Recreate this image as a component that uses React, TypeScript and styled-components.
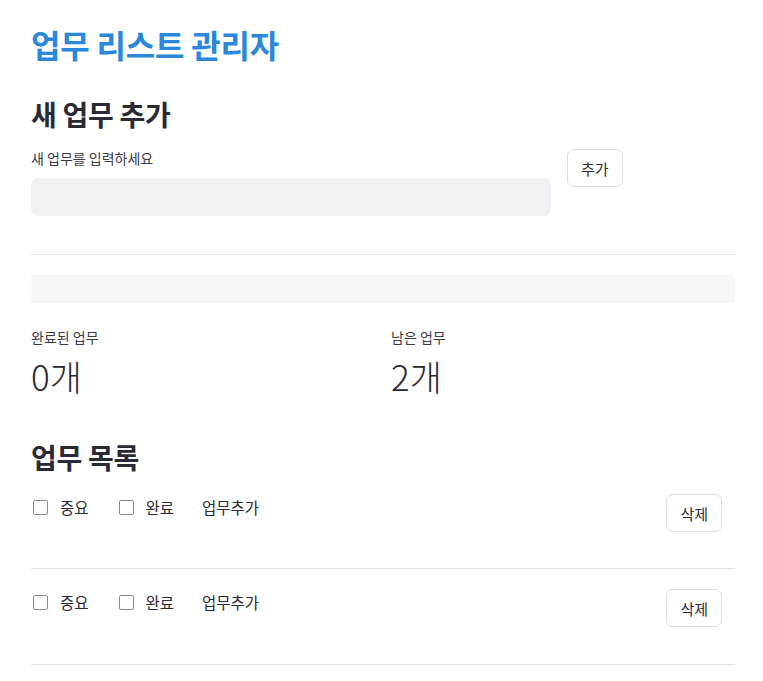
import React from "react";
import styled, { createGlobalStyle } from "styled-components";

const Global = createGlobalStyle`
  html, body { margin: 0; padding: 0; background: #ffffff; }
  body {
    font-family: "Noto Sans CJK KR", "Noto Sans", sans-serif;
    color: #2a2a35;
  }
  * { box-sizing: border-box; }
`;

const Page = styled.div`
  width: 763px;
  padding: 22px 28px 16px 31px;
  display: flex;
  flex-direction: column;
`;

const Title = styled.h1`
  margin: 0;
  font-size: 32px;
  font-weight: 700;
  line-height: 44px;
  color: #2a88dc;
  letter-spacing: -0.2px;
`;

const SectionTitle = styled.h2<{ $top: number }>`
  margin: ${(p) => p.$top}px 0 0;
  font-size: 28px;
  font-weight: 700;
  line-height: 38px;
  color: #2a2a35;
  letter-spacing: -0.3px;
`;

const FormRow = styled.div`
  display: flex;
  align-items: flex-start;
  gap: 16px;
  margin-top: 15px;
`;

const Field = styled.label`
  display: flex;
  flex-direction: column;
  gap: 10px;
  width: 520px;
`;

const FieldLabel = styled.span`
  font-size: 14px;
  line-height: 20px;
  color: #3a3a44;
`;

const TextInput = styled.input`
  height: 38px;
  border: none;
  border-radius: 8px;
  background: #eff1f5;
  padding: 0 12px;
  font-size: 15px;
  font-family: inherit;
  outline: none;
`;

const Button = styled.button<{ $offset?: number }>`
  height: 38px;
  margin-top: ${(p) => p.$offset ?? 0}px;
  padding: 0 13px;
  background: #ffffff;
  border: 1px solid #dadde2;
  border-radius: 7px;
  font-family: inherit;
  font-size: 15px;
  color: #2a2a35;
  cursor: pointer;
`;

const Divider = styled.hr`
  width: 100%;
  border: none;
  border-top: 1px solid #e3e4e6;
  margin: 38px 0 0;
`;

const Progress = styled.div`
  height: 28px;
  margin-top: 20px;
  border-radius: 4px;
  background: #f6f7f9;
  overflow: hidden;
`;

const Fill = styled.div`
  height: 100%;
  background: #2a88dc;
`;

const Stats = styled.div`
  display: grid;
  grid-template-columns: 1fr 1fr;
  gap: 16px;
  margin-top: 24px;
`;

const Stat = styled.div`
  display: flex;
  flex-direction: column;
`;

const StatLabel = styled.span`
  font-size: 14px;
  line-height: 20px;
  color: #3a3a44;
`;

const StatValue = styled.span`
  font-size: 35px;
  font-weight: 300;
  line-height: 46px;
  margin-top: 6px;
  color: #2a2a35;
`;

const List = styled.ul`
  list-style: none;
  margin: 6px 0 0;
  padding: 0;
`;

const Item = styled.li`
  display: flex;
  align-items: flex-start;
  justify-content: space-between;
  padding: 12px 13px 36px 0;
  border-bottom: 1px solid #e3e4e6;
  & + & { padding-top: 20px; padding-bottom: 37px; }
`;

const ItemLeft = styled.div`
  display: flex;
  align-items: center;
  gap: 28px;
  padding-top: 1px;
`;

const Check = styled.label`
  display: flex;
  align-items: center;
  gap: 12px;
  font-size: 15.5px;
  line-height: 24px;
  color: #2a2a35;
  padding-left: 2px;
`;

const Box = styled.input`
  appearance: none;
  width: 15px;
  height: 15px;
  margin: 0;
  border: 1px solid #8c8c8c;
  border-radius: 2px;
  background: #fff;
`;

const ItemText = styled.span`
  font-size: 15.5px;
  line-height: 24px;
  color: #2a2a35;
`;

const tasks = [
  { id: 1, text: "업무추가", important: false, done: false },
  { id: 2, text: "업무추가", important: false, done: false },
];

export default function App() {
  const done = tasks.filter((t) => t.done).length;
  const left = tasks.length - done;
  const pct = tasks.length ? (done / tasks.length) * 100 : 0;
  return (
    <>
      <Global />
      <Page>
        <Title>업무 리스트 관리자</Title>
        <SectionTitle $top={29}>새 업무 추가</SectionTitle>
        <FormRow>
          <Field>
            <FieldLabel>새 업무를 입력하세요</FieldLabel>
            <TextInput />
          </Field>
          <Button $offset={1}>추가</Button>
        </FormRow>
        <Divider />
        <Progress>
          <Fill style={{ width: `${pct}%` }} />
        </Progress>
        <Stats>
          <Stat>
            <StatLabel>완료된 업무</StatLabel>
            <StatValue>{done}개</StatValue>
          </Stat>
          <Stat>
            <StatLabel>남은 업무</StatLabel>
            <StatValue>{left}개</StatValue>
          </Stat>
        </Stats>
        <SectionTitle $top={39}>업무 목록</SectionTitle>
        <List>
          {tasks.map((t) => (
            <Item key={t.id}>
              <ItemLeft>
                <Check>
                  <Box type="checkbox" defaultChecked={t.important} />
                  중요
                </Check>
                <Check>
                  <Box type="checkbox" defaultChecked={t.done} />
                  완료
                </Check>
                <ItemText>{t.text}</ItemText>
              </ItemLeft>
              <Button>삭제</Button>
            </Item>
          ))}
        </List>
      </Page>
    </>
  );
}
